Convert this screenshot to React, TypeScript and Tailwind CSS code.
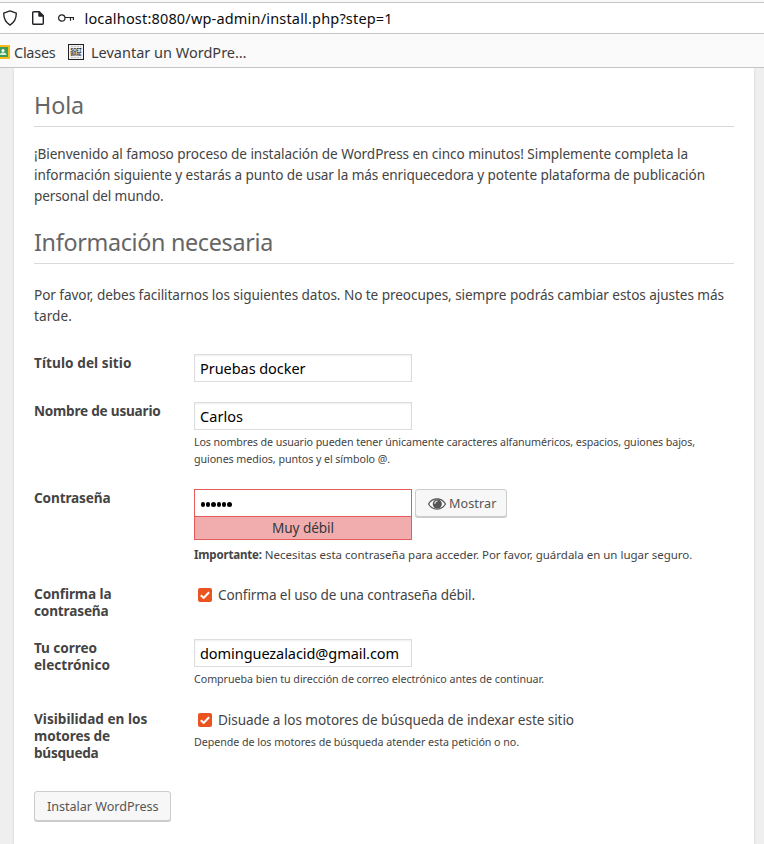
import type { ReactNode } from "react";

function ShieldIcon() {
  return (
    <svg className="absolute left-[2px] top-[7px] h-4 w-4" viewBox="0 0 16 16" fill="none" stroke="#222226" strokeWidth="1.35" strokeLinejoin="round">
      <path d="M8 .9 14.3 3.2c0 4.3-1.2 8.7-6.3 11.9C2.900 11.900 1.700 7.500 1.700 3.200Z" />
    </svg>
  );
}

function PageIcon() {
  return (
    <svg className="absolute left-[30px] top-[7px] h-4 w-4" viewBox="0 0 16 16" fill="none" stroke="#222226" strokeWidth="1.4" strokeLinejoin="round">
      <path d="M3.700 1.700h5.600l4 4v7.600a1 1 0 0 1-1 1H3.700a1 1 0 0 1-1-1V2.700a1 1 0 0 1 1-1Z" />
      <path d="M9 1.700v4.300h4.300" fill="#222226" />
    </svg>
  );
}

function KeyIcon() {
  return (
    <svg className="absolute left-[57px] top-[9px] h-[14px] w-[18px]" viewBox="0 0 18 14" fill="none" stroke="#222226" strokeWidth="1.2">
      <circle cx="4.800" cy="6" r="3.200" />
      <path d="M8 5.500h9M13.500 5.500v3.200M16.400 5.500v2.500" />
    </svg>
  );
}

function ClassroomIcon() {
  return (
    <svg className="h-[14px] w-[10px] shrink-0" viewBox="0 0 10 14">
      <rect x="-6" width="16" height="14" rx="1" fill="#f6bb16" />
      <rect x="-4" y="2" width="12" height="10" fill="#3f9c58" />
      <circle cx="3" cy="5.500" r="1.500" fill="#fff" />
      <path d="M0 10c0-1.900 1.500-2.500 3-2.500s3.500.6 3.500 2.500Z" fill="#d6f0dc" />
    </svg>
  );
}

function SoftwareIcon() {
  return (
    <svg className="h-4 w-4 shrink-0" viewBox="0 0 16 16">
      <rect x=".5" y=".5" width="15" height="15" fill="#f1f1f1" stroke="#222" />
      <path d="M3 2.500h10M3 13.500h10" stroke="#c4c4c4" strokeDasharray="2 1" />
      <text x="2.500" y="7.700" fontSize="4.600" fontWeight="700" textLength="11" lengthAdjust="spacingAndGlyphs" fill="#222" fontFamily="Liberation Sans, sans-serif">SOFT</text>
      <text x="2.500" y="11.600" fontSize="4.600" fontWeight="700" textLength="11" lengthAdjust="spacingAndGlyphs" fill="#222" fontFamily="Liberation Sans, sans-serif">WARE</text>
    </svg>
  );
}

function EyeIcon() {
  return (
    <svg className="h-5 w-5 shrink-0" viewBox="0 0 20 20">
      <path d="M1.500 10C3.500 6.700 6.500 4.900 10 4.900s6.500 1.800 8.500 5.100c-2 3.300-5 5.100-8.500 5.100S3.500 13.300 1.500 10Z" fill="#fff" stroke="#555" strokeWidth="1.200" />
      <circle cx="10.300" cy="9.900" r="4.600" fill="#555" />
      <path d="M7.900 9.300c.1-1.300.9-2.100 2.200-2.300" fill="none" stroke="#f7f7f7" strokeWidth="1.200" strokeLinecap="round" />
    </svg>
  );
}

function Checkbox() {
  return (
    <span className="ml-1 mr-[6px] flex h-[14px] w-[14px] shrink-0 items-center justify-center rounded-[2px] bg-[#e95420]">
      <svg className="h-[14px] w-[14px]" viewBox="0 0 14 14" fill="none" stroke="#fff" strokeWidth="2">
        <path d="m2.800 7.200 2.900 2.700 5.400-5.700" />
      </svg>
    </span>
  );
}

function Heading({ children }: { children: ReactNode }) {
  return <h1 className="h-[44px] border-b border-[#dadada] text-[23.3px] leading-[45px] text-[#666]">{children}</h1>;
}

function Field({ value, className }: { value: string; className: string }) {
  return (
    <div className="h-7 w-[218px] border border-[#ddd] pl-[5px] text-[14.5px] leading-[27px] text-black shadow-[inset_0_1px_2px_rgba(0,0,0,0.07)]">
      <span className={className}>{value}</span>
    </div>
  );
}

function Row({ label, className, children }: { label: ReactNode; className: string; children: ReactNode }) {
  return (
    <div className={`flex ${className}`}>
      <div className="w-40 shrink-0 text-[13.6px] font-bold leading-[17px]">{label}</div>
      <div className="grow">{children}</div>
    </div>
  );
}

export default function App() {
  return (
    <div className="flex h-[844px] w-[764px] flex-col overflow-hidden whitespace-nowrap bg-[#efefef] font-['Noto_Sans','Open_Sans',sans-serif] text-[#444]">
      <header className="z-10 shrink-0">
        <div className="h-[2px] bg-[#f9f9fb]" />
        <div className="relative h-8 border-b border-t border-[#c4c4c4] bg-white">
          <ShieldIcon />
          <PageIcon />
          <KeyIcon />
          <div className="pl-[84.500px] text-[14.5px] leading-[31px] tracking-[0.180px] text-[#0c0c0d]">localhost:8080/wp-admin/install.php?step=1</div>
        </div>
        <div className="flex h-[34px] items-center border-b border-[#c4c4c4] bg-[#fafafa] pt-[2px] text-[14.5px] leading-8 text-[#3c3c3e]">
          <ClassroomIcon />
          <span className="ml-1 tracking-[-0.268px]">Clases</span>
          <span className="ml-[12.500px] flex items-center">
            <SoftwareIcon />
          </span>
          <span className="ml-[7px]">Levantar un WordPre…</span>
        </div>
      </header>

      <main className="ml-[14px] h-[776px] w-[740px] shrink-0 bg-white px-5 pt-[15px] shadow-[0_1px_3px_rgba(0,0,0,0.13)]">
        <Heading><span className="tracking-[-0.113px]">Hola</span></Heading>
        <div className="mt-4 text-[13.6px] leading-[21px]">
          <p className="tracking-[-0.073px]">¡Bienvenido al famoso proceso de instalación de WordPress en cinco minutos! Simplemente completa la</p>
          <p className="tracking-[-0.095px]">información siguiente y estarás a punto de usar la más enriquecedora y potente plataforma de publicación</p>
          <p className="tracking-[-0.146px]">personal del mundo.</p>
        </div>
        <div className="pt-[14px]">
          <Heading><span className="tracking-[-0.306px]">Información necesaria</span></Heading>
        </div>
        <div className="mt-5 text-[13.6px] leading-[21px]">
          <p className="tracking-[-0.069px]">Por favor, debes facilitarnos los siguientes datos. No te preocupes, siempre podrás cambiar estos ajustes más</p>
          <p className="tracking-[0.076px]">tarde.</p>
        </div>

        <div className="mt-7">
          <Row label={<span className="tracking-[0.070px]">Título del sitio</span>} className="h-12">
            <Field value="Pruebas docker" className="tracking-[-0.052px]" />
          </Row>
          <Row label={<span className="tracking-[-0.228px]">Nombre de usuario</span>} className="h-[87px]">
            <Field value="Carlos" className="tracking-[0.042px]" />
            <div className="mt-1 text-[10.7px] leading-[17px]">
              <p className="tracking-[-0.096px]">Los nombres de usuario pueden tener únicamente caracteres alfanuméricos, espacios, guiones bajos,</p>
              <p className="tracking-[-0.071px]">guiones medios, puntos y el símbolo @.</p>
            </div>
          </Row>
          <Row label={<span className="tracking-[-0.133px]">Contraseña</span>} className="h-24">
            <div className="flex items-start">
              <div className="w-[218px]">
                <div className="flex h-7 items-center gap-[1px] border border-[#e35b5b] pl-[5.500px] pt-[3px]">
                  {[0, 1, 2, 3, 4, 5].map((dot) => (
                    <i key={dot} className="h-[4.400px] w-[4.400px] rounded-full bg-black" />
                  ))}
                </div>
                <div className="-mt-px h-6 border border-[#e35b5b] bg-[#f1adad] text-center text-[13.6px] leading-[22px] tracking-[-0.068px] text-[#32373c]">Muy débil</div>
              </div>
              <div className="ml-[3px] flex h-7 w-[92px] items-center rounded-[3px] border border-[#ccc] bg-[#f7f7f7] pl-[11px] pt-px text-[12.6px] text-[#555] shadow-[0_1px_0_#ccc]">
                <EyeIcon />
                <span className="ml-[2px] pt-px tracking-[0.094px]">Mostrar</span>
              </div>
            </div>
            <p className="mt-[6px] text-[11.5px] leading-[17px] tracking-[-0.010px]">
              <b className="tracking-[-0.180px]">Importante:</b> Necesitas esta contraseña para acceder. Por favor, guárdala en un lugar seguro.
            </p>
          </Row>
          <Row
            label={<><p className="tracking-[-0.098px]">Confirma la</p><p className="tracking-[-0.163px]">contraseña</p></>}
            className="h-[54px]"
          >
            <div className="flex h-5 items-center text-[13.6px] tracking-[-0.115px]">
              <Checkbox />Confirma el uso de una contraseña débil.
            </div>
          </Row>
          <Row
            label={<><p className="tracking-[-0.061px]">Tu correo</p><p>electrónico</p></>}
            className="h-[71px]"
          >
            <Field value="dominguezalacid@gmail.com" className="tracking-[-0.064px]" />
            <p className="mt-1 text-[10.7px] leading-[17px] tracking-[-0.044px]">Comprueba bien tu dirección de correo electrónico antes de continuar.</p>
          </Row>
          <Row
            label={<><p>Visibilidad en los</p><p className="tracking-[-0.114px]">motores de</p><p className="tracking-[-0.254px]">búsqueda</p></>}
            className="h-[81px]"
          >
            <div className="flex h-5 items-center text-[13.6px] tracking-[-0.082px]">
              <Checkbox />Disuade a los motores de búsqueda de indexar este sitio
            </div>
            <p className="mt-1 text-[10.7px] leading-[17px] tracking-[-0.052px]">Depende de los motores de búsqueda atender esta petición o no.</p>
          </Row>
        </div>
        <div className="h-[30px] w-[137px] rounded-[3px] border border-[#ccc] bg-[#f7f7f7] pl-3 text-[12.6px] leading-[30px] tracking-[-0.028px] text-[#555] shadow-[0_1px_0_#ccc]">Instalar WordPress</div>
      </main>
    </div>
  );
}
